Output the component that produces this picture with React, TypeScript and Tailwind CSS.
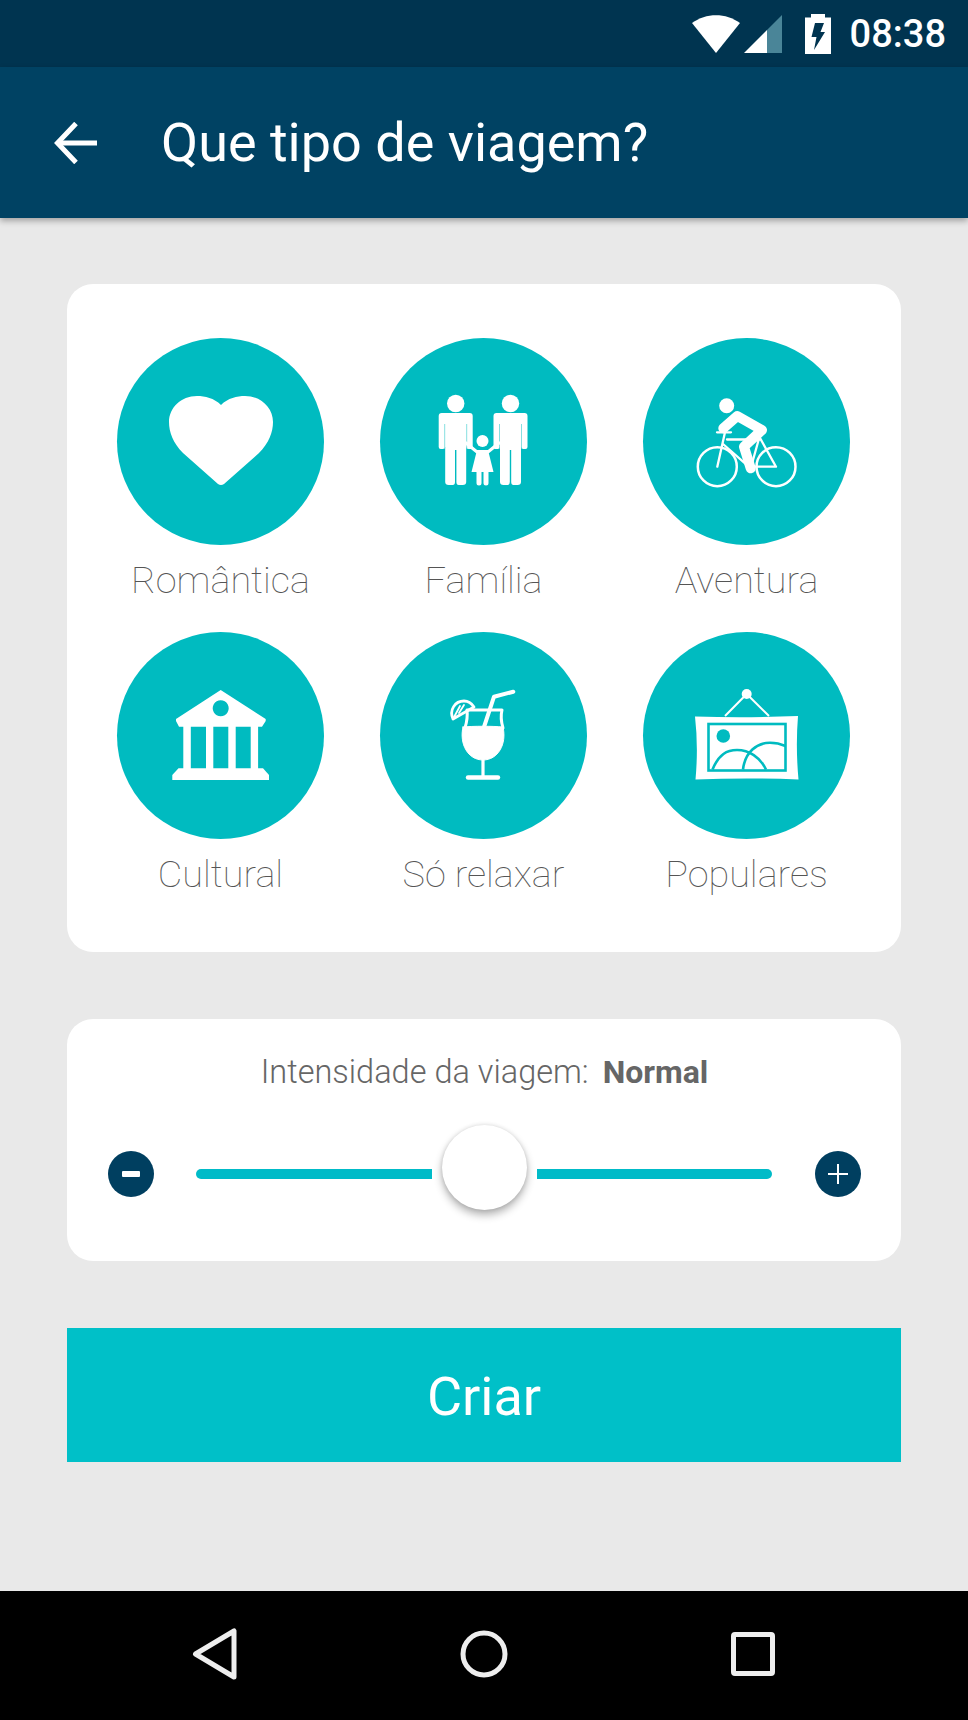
import React from "react";

const TEAL = "#00BBC0";

function Man({ cx }: { cx: number }) {
  return (
    <g>
      <circle cx={cx} cy={65.5} r={8.7} fill="#fff" />
      <path
        fill="#fff"
        d={`M${cx - 14} 75 H${cx + 14} Q${cx + 17} 75 ${cx + 17} 78 V109 Q${cx + 17} 111 ${cx + 15} 111 H${cx + 13} Q${cx + 10.5} 111 ${cx + 10.5} 109 V144 Q${cx + 10.5} 147 ${cx + 7} 147 H${cx + 3} Q${cx + 0.7} 147 ${cx + 0.7} 144 V112 H${cx - 0.7} V144 Q${cx - 0.7} 147 ${cx - 3} 147 H${cx - 7} Q${cx - 10.5} 147 ${cx - 10.5} 144 V109 Q${cx - 10.5} 111 ${cx - 13} 111 H${cx - 15} Q${cx - 17} 111 ${cx - 17} 109 V78 Q${cx - 17} 75 ${cx - 14} 75Z`}
      />
      <path d={`M${cx - 11} 86 V110 M${cx + 11} 86 V110`} stroke={TEAL} strokeWidth={0.8} opacity={0.6} fill="none" />
    </g>
  );
}

function Family() {
  return (
    <>
      <Man cx={75.7} />
      <Man cx={130.5} />
      <circle cx={102.5} cy={103} r={6} fill="#fff" />
      <path d="M86 105 L97 114 H108 L119 105" stroke="#fff" strokeWidth={3.2} fill="none" strokeLinecap="round" />
      <path d="M97 112 H108 L113.5 134 H91.5Z" fill="#fff" />
      <path d="M99 133 V145 M106 133 V145" stroke="#fff" strokeWidth={5} strokeLinecap="round" fill="none" />
    </>
  );
}

function Bike() {
  return (
    <g fill="none" stroke="#fff" strokeLinecap="round" strokeLinejoin="round">
      <circle cx={83.7} cy={67.7} r={7.5} fill="#fff" stroke="none" />
      <circle cx={74.3} cy={128.7} r={19.5} strokeWidth={2.5} />
      <circle cx={133} cy={128.7} r={19.5} strokeWidth={2.5} />
      <path d="M80.3 90.3 L94.3 78 L119 92 L101 108.7 L107.7 130.3" strokeWidth={10} />
      <path d="M74 94.3 H88 M82 94.3 L74.3 128.7 M84 101.5 H117 M80 106 L107.7 130.3 M117 97 L107.7 130.3 M117 100 L133 128.7 H108" strokeWidth={2.3} />
    </g>
  );
}

function Museum() {
  return (
    <g fill="#fff">
      <path
        fillRule="evenodd"
        d="M103.7 58 L148.7 87 V89 L145 94.7 H62 L59 89 V87Z M103.7 68.3 a8 8 0 1 0 0.01 0Z"
      />
      <rect x={66.3} y={94} width={7.5} height={43} />
      <rect x={89} y={94} width={7.3} height={43} />
      <rect x={111.3} y={94} width={7.4} height={43} />
      <rect x={133.7} y={94} width={7.4} height={43} />
      <path d="M61.5 136.3 H146 L152 143 V148 H55.3 V143Z" />
    </g>
  );
}

function Cocktail() {
  return (
    <g fill="none" stroke="#fff" strokeLinecap="round" strokeLinejoin="round">
      <path d="M133.3 59.7 L114 64.7 L104 95" strokeWidth={4} />
      <path d="M87 78 H122 Q120 86 123 96 M87 78 Q88 86 85 96" strokeWidth={3} />
      <path d="M83 95 C93 94 113 94 123 95 C127 112 118 128 103 128 C88 128 79 112 83 95Z" fill="#fff" strokeWidth={1} />
      <path d="M103 128 V145" strokeWidth={3.2} />
      <path d="M88 145.5 H118" strokeWidth={4.4} />
      <path d="M73 87 C69 78 75 69 84 69 C88 69 92 72 94 75Z" strokeWidth={2.8} />
      <path d="M73 87 L80 74 M84 73 L79 81" strokeWidth={1.8} />
    </g>
  );
}

function Picture() {
  return (
    <g fill="none">
      <path d="M82 84 L103.7 62 L126 84" stroke="#fff" strokeWidth={2} />
      <circle cx={103.7} cy={62} r={5} fill="#fff" />
      <path d="M52 84.5 Q104 86 155 84 Q152.5 115 155.5 147.5 Q104 145.5 52.5 147.5 Q55.5 115 52 84.5Z" fill="#fff" />
      <rect x={65.5} y={92} width={77} height={46.5} stroke={TEAL} strokeWidth={2.6} />
      <circle cx={80.3} cy={104} r={6.8} fill={TEAL} />
      <path d="M69.5 137.5 C76 122 84 118 94 118 C106 118 117 125 123 137.5" stroke={TEAL} strokeWidth={2.6} />
      <path d="M100 137.5 C102 120 114 110.7 127 110.7 C133 110.7 138 112 142.5 114" stroke={TEAL} strokeWidth={2.6} />
    </g>
  );
}

function Heart() {
  return (
    <path
      fill="#fff"
      d="M104 67 C97 60 88 58 80 58 C64 58 52 70 52 84 C52 94 56 105 66 115 L101 146 Q104 148 107 146 L142 115 C152 105 156 94 156 84 C156 70 144 58 128 58 C120 58 111 60 104 67Z"
    />
  );
}

const items: { label: string; icon: React.ReactNode }[] = [
  { label: "Romântica", icon: <Heart /> },
  { label: "Família", icon: <Family /> },
  { label: "Aventura", icon: <Bike /> },
  { label: "Cultural", icon: <Museum /> },
  { label: "Só relaxar", icon: <Cocktail /> },
  { label: "Populares", icon: <Picture /> },
];

export default function App() {
  return (
    <div className="w-[968px] h-[1720px] flex flex-col bg-[#e9e9e9] font-['Roboto',sans-serif] overflow-hidden">
      <div className="h-[67px] shrink-0 bg-[#003450] flex items-center justify-end text-white">
        <svg width="48" height="38" viewBox="0 0 48 38" className="mr-[4px]">
          <path d="M0 8 C14 -2.5 34 -2.5 48 8 L24 38Z" fill="#fff" />
        </svg>
        <svg width="38" height="38" viewBox="0 0 38 38" className="mr-[23px]">
          <path d="M0 38 L23 15 V38Z" fill="#fff" />
          <path d="M23 15 L38 0 V38 H23Z" fill="#4a8598" />
        </svg>
        <svg width="26" height="40" viewBox="0 0 26 40" className="mr-[19px]">
          <path d="M6 0 H20 V3.5 H26 V40 H0 V3.5 H6Z" fill="#fff" />
          <path d="M10 9 H19 L15.5 18 H20 L9 36 L11.5 23 H6.5Z" fill="#003450" />
        </svg>
        <span className="text-[38px] font-medium leading-none mr-[22px]">08:38</span>
      </div>

      <div className="h-[151px] shrink-0 bg-[#004263] flex items-center shadow-[0_3px_6px_rgba(0,0,0,0.3)] relative">
        <svg width="44" height="42" viewBox="0 0 44 42" className="ml-[54px]" fill="none" stroke="#fff" strokeWidth="5">
          <path d="M43 21 H3" />
          <path d="M22 1.5 L3.5 21 L22 40.5" />
        </svg>
        <span className="ml-[63px] text-[54px] leading-none text-white">Que tipo de viagem?</span>
      </div>

      <main className="flex-1 px-[67px] pt-[66px]">
        <div className="bg-white rounded-[26px] h-[668px] pt-[54px] pl-[50px]">
          <div className="grid grid-cols-[207px_207px_207px] gap-x-[56px] auto-rows-[294px]">
            {items.map((it) => (
              <div key={it.label} className="flex flex-col items-center">
                <div className="w-[207px] h-[207px] rounded-full bg-[#00BBC0] shrink-0">
                  <svg width="207" height="207" viewBox="0 0 207 207">
                    {it.icon}
                  </svg>
                </div>
                <div className="mt-[13px] text-[37.8px] leading-[44px] font-thin text-[#555555] whitespace-nowrap">
                  {it.label}
                </div>
              </div>
            ))}
          </div>
        </div>

        <div className="mt-[67px] bg-white rounded-[26px] h-[242px] pl-[41px] pr-[40px] pt-[33px]">
          <div className="flex justify-center items-baseline leading-[40px] text-[#666666] whitespace-nowrap">
            <span className="text-[32.5px] font-light">Intensidade da viagem:</span>
            <span className="ml-[14px] text-[32px] font-bold">Normal</span>
          </div>
          <div className="mt-[59px] flex items-center h-[46px]">
            <div className="w-[46px] h-[46px] rounded-full bg-[#003F60] shrink-0 flex items-center justify-center">
              <div className="w-[18px] h-[6px] bg-white rounded-[1px]" />
            </div>
            <div className="flex-1 ml-[42px] mr-[43px] flex items-center">
              <div className="flex-1 h-[10px] bg-[#00BBC8] rounded-l-full" />
              <div className="w-[105px] h-[10px] relative shrink-0">
                <div className="absolute left-[10px] top-[-44px] w-[85px] h-[85px] rounded-full bg-white shadow-[0_5px_8px_rgba(0,0,0,0.3),0_0_4px_rgba(0,0,0,0.12)]" />
              </div>
              <div className="flex-1 h-[10px] bg-[#00BBC8] rounded-r-full" />
            </div>
            <div className="w-[46px] h-[46px] rounded-full bg-[#003F60] shrink-0 flex items-center justify-center">
              <svg width="20" height="20" viewBox="0 0 20 20" stroke="#fff" strokeWidth="2">
                <path d="M10 0 V20 M0 10 H20" />
              </svg>
            </div>
          </div>
        </div>

        <div className="mt-[67px] h-[134px] bg-[#00C0C8] flex items-center justify-center text-white text-[54px] leading-none pt-[3px]">
          Criar
        </div>
      </main>

      <div className="h-[129px] shrink-0 bg-black flex items-center relative">
        <svg width="46" height="52" viewBox="0 0 46 52" className="ml-[192px] mt-[-3px]" fill="none" stroke="#eeeeee" strokeWidth="5" strokeLinejoin="round">
          <path d="M3.5 26 L42 3 V49Z" />
        </svg>
        <svg width="48" height="48" viewBox="0 0 48 48" className="ml-[222px] mt-[-3px]" fill="none" stroke="#eeeeee" strokeWidth="5">
          <circle cx="24" cy="24" r="21" />
        </svg>
        <svg width="44" height="44" viewBox="0 0 44 44" className="ml-[223px] mt-[-3px]" fill="none" stroke="#eeeeee" strokeWidth="5" strokeLinejoin="round">
          <rect x="2.5" y="2.5" width="39" height="39" rx="1.5" />
        </svg>
      </div>
    </div>
  );
}
